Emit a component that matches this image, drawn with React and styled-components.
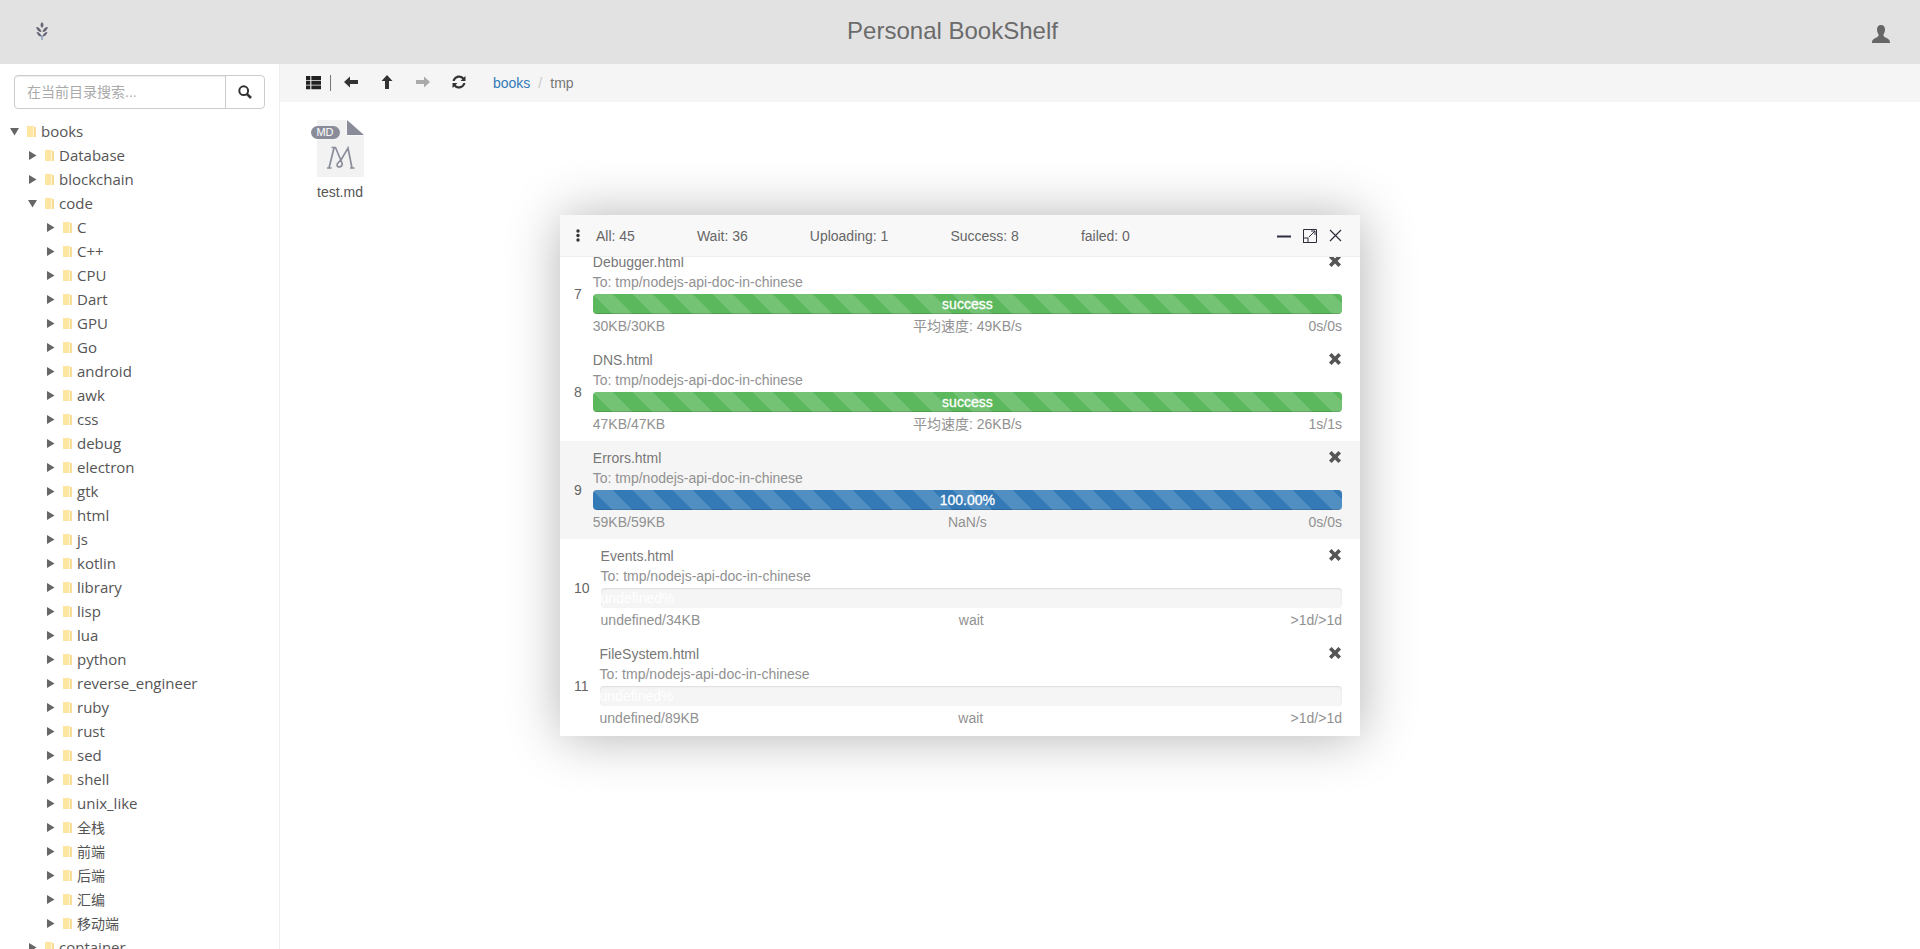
import React from 'react'
import styled, { createGlobalStyle } from 'styled-components'

const GlobalStyle = createGlobalStyle`
  html, body { margin: 0; padding: 0; height: 100%; overflow: hidden; }
  body { font-family: "Liberation Sans", "Noto Sans CJK SC", sans-serif; font-size: 14px; color: #333; background: #fff; }
`

const subFolders = ['C', 'C++', 'CPU', 'Dart', 'GPU', 'Go', 'android', 'awk', 'css', 'debug', 'electron', 'gtk', 'html', 'js', 'kotlin', 'library', 'lisp', 'lua', 'python', 'reverse_engineer', 'ruby', 'rust', 'sed', 'shell', 'unix_like', '全栈', '前端', '后端', '汇编', '移动端']

const uploads = [
  { no: 7, name: 'Debugger.html', size: '30KB/30KB', speed: '平均速度: 49KB/s', time: '0s/0s', bar: 'success', label: 'success' },
  { no: 8, name: 'DNS.html', size: '47KB/47KB', speed: '平均速度: 26KB/s', time: '1s/1s', bar: 'success', label: 'success' },
  { no: 9, name: 'Errors.html', size: '59KB/59KB', speed: 'NaN/s', time: '0s/0s', bar: 'active', label: '100.00%', hover: true },
  { no: 10, name: 'Events.html', size: 'undefined/34KB', speed: 'wait', time: '>1d/>1d', bar: 'wait', label: 'undefined%' },
  { no: 11, name: 'FileSystem.html', size: 'undefined/89KB', speed: 'wait', time: '>1d/>1d', bar: 'wait', label: 'undefined%' },
]

const Glyph = ({ size = 14, color = '#333', children }) => (
  <svg width={size} height={size} viewBox="0 0 14 14" fill={color}>{children}</svg>
)

const Arrow = ({ rotate = 0, color }) => (
  <Glyph color={color}>
    <path transform={`rotate(${rotate} 7 7)`} d="M0 7 L6 1.5 L6 5 L14 5 L14 9 L6 9 L6 12.5 Z" />
  </Glyph>
)

const Remove = () => (
  <Glyph size={14} color="#555">
    <path d="M3.6 1 L7 4.4 L10.4 1 L13 3.6 L9.6 7 L13 10.4 L10.4 13 L7 9.6 L3.6 13 L1 10.4 L4.4 7 L1 3.6 Z" />
  </Glyph>
)

const FolderIcon = () => (
  <svg width="9" height="11" viewBox="0 0 9 11">
    <rect width="7" height="11" fill="#fde5a2" />
    <rect x="7" y="1" width="2" height="10" fill="#f6dc95" />
    <rect x="6" y="1" width="1" height="10" fill="#fff6da" />
  </svg>
)

const Caret = ({ open }) => (
  <svg width="9" height="9" viewBox="0 0 9 9" fill="#666">
    {open ? <path d="M0 1 L9 1 L4.5 8.5 Z" /> : <path d="M1 0 L8.5 4.5 L1 9 Z" />}
  </svg>
)

const Wheat = () => (
  <svg width="12" height="18" viewBox="0 0 12 18">
    <path d="M6 0 C8 2 8 4 6 6 C4 4 4 2 6 0 Z" fill="#667" />
    <path d="M0 5 C3 5 5 7 5.5 10 C2.5 10 1 8 0 5 Z M12 5 C9 5 7 7 6.5 10 C9.5 10 11 8 12 5 Z M0.5 10 C3 10 5 12 5.5 14.5 C3 14.5 1.5 13 0.5 10 Z M11.5 10 C9 10 7 12 6.5 14.5 C9 14.5 10.5 13 11.5 10 Z" fill="#667" />
    <rect x="5.4" y="13" width="1.2" height="5" fill="#6f8fb5" />
  </svg>
)

const isCjk = (name) => /[\u4e00-\u9fff]/.test(name)

const App = () => (
  <Page>
    <GlobalStyle />
    <Header>
      <Logo><Wheat /></Logo>
      <Title>Personal BookShelf</Title>
      <UserButton>
        <svg width="18" height="18" viewBox="0 0 18 18" fill="#666">
          <path d="M9 0 C11.8 0 13 2 13 4.6 C13 7 12 8.6 11.4 9.6 C11.4 11.6 12.4 12 14 12.8 C16 13.7 18 14.6 18 18 L0 18 C0 14.6 2 13.7 4 12.8 C5.6 12 6.6 11.6 6.6 9.6 C6 8.6 5 7 5 4.6 C5 2 6.2 0 9 0 Z" />
        </svg>
      </UserButton>
    </Header>
    <Body>
      <Sidebar>
        <SearchBox>
          <SearchInput placeholder="在当前目录搜索..." />
          <SearchButton>
            <svg width="14" height="14" viewBox="0 0 14 14" fill="none" stroke="#333">
              <circle cx="5.7" cy="5.7" r="4.4" strokeWidth="2" />
              <path d="M8.8 8.8 L13 13" strokeWidth="2.6" />
            </svg>
          </SearchButton>
        </SearchBox>
        <Tree>
          <TreeRow $level={0}><Caret open /><FolderIcon /><span>books</span></TreeRow>
          <TreeRow $level={1}><Caret /><FolderIcon /><span>Database</span></TreeRow>
          <TreeRow $level={1}><Caret /><FolderIcon /><span>blockchain</span></TreeRow>
          <TreeRow $level={1}><Caret open /><FolderIcon /><span>code</span></TreeRow>
          {subFolders.map((name) => (
            <TreeRow $level={2} $cjk={isCjk(name)} key={name}><Caret /><FolderIcon /><span>{name}</span></TreeRow>
          ))}
          <TreeRow $level={1}><Caret /><FolderIcon /><span>container</span></TreeRow>
        </Tree>
      </Sidebar>
      <Main>
        <Toolbar>
          <ToolButton>
            <Glyph size={15} color="#222">
              <path d="M0 1 H4 V4.6 H0 Z M5 1 H14 V4.6 H5 Z M0 5.4 H4 V9 H0 Z M5 5.4 H14 V9 H5 Z M0 9.8 H4 V13.4 H0 Z M5 9.8 H14 V13.4 H5 Z" />
            </Glyph>
          </ToolButton>
          <ToolDivider />
          <ToolButton $w={36}><Arrow color="#333" /></ToolButton>
          <ToolButton $w={36}><Arrow rotate={90} color="#333" /></ToolButton>
          <ToolButton $w={36}><Arrow rotate={180} color="#aaa" /></ToolButton>
          <ToolButton $w={36}>
            <Glyph color="#333">
              <path d="M7 0.5 C9 0.5 10.6 1.3 11.8 2.6 L13.5 1 V6 H8.5 L10.3 4.2 C9.4 3.2 8.3 2.7 7 2.7 C4.9 2.7 3.2 4 2.7 6 H0.6 C1.1 2.9 3.8 0.5 7 0.5 Z M0.5 8 H5.5 L3.7 9.8 C4.6 10.8 5.7 11.3 7 11.3 C9.1 11.3 10.8 10 11.3 8 H13.4 C12.9 11.1 10.2 13.5 7 13.5 C5 13.5 3.4 12.7 2.2 11.4 L0.5 13 Z" />
            </Glyph>
          </ToolButton>
          <Crumbs>
            <CrumbLink>books</CrumbLink>
            <CrumbSep>/</CrumbSep>
            <span>tmp</span>
          </Crumbs>
        </Toolbar>
        <Files>
          <FileCard>
            <FileIcon>
              <svg width="47" height="57" viewBox="0 0 47 57">
                <path d="M0 0 H29.5 V15.5 H47 V57 H0 Z" fill="#f2f2f3" />
                <path d="M30 0 L47 15 H30 Z" fill="#8a8d99" />
                <path d="M10 48 H14.5 M12 48 L17 28 M14.5 27.5 H18.5 L25 43 C26.5 47 20 48.5 20 45 C20 43 22 42 24 40 L31 28 L35 48 M33 48 H37.5" fill="none" stroke="#8a8d99" strokeWidth="1.7" />
              </svg>
              <FileBadge>MD</FileBadge>
            </FileIcon>
            <FileName>test.md</FileName>
          </FileCard>
        </Files>
      </Main>
    </Body>

    <UploadDialog>
      <DialogHead>
        <MoreDots>
          <svg width="4" height="13" viewBox="0 0 4 13" fill="#333">
            <circle cx="2" cy="2" r="1.7" /><circle cx="2" cy="6.5" r="1.7" /><circle cx="2" cy="11" r="1.7" />
          </svg>
        </MoreDots>
        <Counts>
          <span>All: 45</span>
          <span>Wait: 36</span>
          <span>Uploading: 1</span>
          <span>Success: 8</span>
          <span>failed: 0</span>
        </Counts>
        <WindowButtons>
          <svg width="14" height="14" viewBox="0 0 14 14"><rect y="6.5" width="14" height="2" fill="#2e2d3c" /></svg>
          <svg width="14" height="14" viewBox="0 0 14 14" fill="none" stroke="#2e2d3c">
            <path d="M.5 9 V.5 H13.5 V13.5 H5" /><rect x=".5" y="9" width="4.5" height="4.5" /><path d="M6 8 L12 2 M8 2 H12 V6" />
          </svg>
          <svg width="13" height="13" viewBox="0 0 13 13" stroke="#2e2d3c" strokeWidth="1.2"><path d="M1 1 L12 12 M12 1 L1 12" /></svg>
        </WindowButtons>
      </DialogHead>
      <UploadList>
        {uploads.map((u) => (
          <UploadItem key={u.no} $hover={u.hover}>
            <ItemNo>{u.no}</ItemNo>
            <ItemBody>
              <ItemTop>
                <ItemName>{u.name}</ItemName>
                <Remove />
              </ItemTop>
              <ItemTarget>To: tmp/nodejs-api-doc-in-chinese</ItemTarget>
              <Progress><Bar $kind={u.bar}>{u.label}</Bar></Progress>
              <ItemStats>
                <span>{u.size}</span>
                <StatMid>{u.speed}</StatMid>
                <StatEnd>{u.time}</StatEnd>
              </ItemStats>
            </ItemBody>
          </UploadItem>
        ))}
      </UploadList>
    </UploadDialog>
  </Page>
)

export default App

const Page = styled.div`
  height: 949px;
  display: flex;
  flex-direction: column;
  overflow: hidden;
`
const Header = styled.header`
  height: 64px;
  flex: none;
  box-sizing: border-box;
  background: #e2e2e2;
  display: flex;
  align-items: center;
  justify-content: space-between;
  padding: 0 30px 2px 35px;
`
const Logo = styled.div`
  width: 14px;
  display: flex;
  justify-content: center;
`
const Title = styled.h1`
  margin: 0;
  font-size: 24px;
  font-weight: 400;
  color: #6b6b6b;
`
const UserButton = styled.div`
  width: 34px;
  display: flex;
  justify-content: flex-end;
  padding-top: 6px;
`
const Body = styled.div`
  flex: 1;
  display: flex;
  min-height: 0;
`
const Sidebar = styled.aside`
  width: 280px;
  flex: none;
  box-sizing: border-box;
  border-right: 1px solid #eee;
  padding: 11px 0 0 0;
  overflow: hidden;
`
const SearchBox = styled.div`
  margin: 0 14px;
  width: 251px;
  height: 34px;
  display: flex;
  box-sizing: border-box;
  border: 1px solid #ccc;
  border-radius: 4px;
`
const SearchInput = styled.input`
  flex: 1;
  min-width: 0;
  border: 0;
  outline: 0;
  background: none;
  padding: 0 12px;
  font: 14px "Liberation Sans", "Noto Sans CJK SC", sans-serif;
  box-shadow: inset 0 1px 1px rgba(0, 0, 0, .075);
  border-radius: 4px 0 0 4px;
  &::placeholder { color: #aaa; }
`
const SearchButton = styled.div`
  width: 38px;
  border-left: 1px solid #ccc;
  display: flex;
  align-items: center;
  justify-content: center;
`
const Tree = styled.div`
  margin-top: 10px;
`
const TreeRow = styled.div`
  height: 24px;
  display: flex;
  align-items: center;
  padding-left: ${(p) => 10 + p.$level * 18}px;
  font-family: "Open Sans", "Noto Sans CJK SC", sans-serif;
  font-size: ${(p) => (p.$cjk ? 14 : 15)}px;
  color: #555;
  white-space: nowrap;
  svg:nth-child(2) { margin: 0 5px 0 8px; }
`
const Main = styled.main`
  flex: 1;
  min-width: 0;
`
const Toolbar = styled.div`
  height: 38px;
  background: #f5f5f5;
  display: flex;
  align-items: center;
  padding-left: 26px;
`
const ToolButton = styled.div`
  width: ${(p) => p.$w || 15}px;
  display: flex;
  justify-content: center;
  padding-bottom: 2px;
`
const ToolDivider = styled.div`
  width: 1px;
  height: 16px;
  background: #777;
  margin: 0 2px 0 9px;
`
const Crumbs = styled.div`
  margin-left: 16px;
  color: #777;
  display: flex;
  gap: 8px;
`
const CrumbLink = styled.span`
  color: #337ab7;
`
const CrumbSep = styled.span`
  color: #ccc;
`
const Files = styled.div`
  padding: 18px 0 0 29px;
`
const FileCard = styled.div`
  width: 62px;
  display: flex;
  flex-direction: column;
  align-items: center;
`
const FileIcon = styled.div`
  position: relative;
  width: 47px;
  height: 57px;
  & > svg { display: block; }
`
const FileBadge = styled.span`
  position: absolute;
  left: -6px;
  top: 6px;
  width: 29px;
  height: 13px;
  border-radius: 7px;
  background: #8a8d99;
  color: #fff;
  font-size: 11px;
  line-height: 13px;
  text-align: center;
`
const FileName = styled.div`
  margin-top: 7px;
  color: #555;
`
const UploadDialog = styled.section`
  position: absolute;
  left: 560px;
  top: 215px;
  width: 800px;
  height: 521px;
  background: #fff;
  box-shadow: 1px 1px 50px rgba(0, 0, 0, .3);
  display: flex;
  flex-direction: column;
`
const DialogHead = styled.div`
  height: 42px;
  flex: none;
  box-sizing: border-box;
  background: #f8f8f8;
  border-bottom: 1px solid #eee;
  display: flex;
  align-items: center;
  padding: 0 18px 0 16px;
  color: #666;
`
const MoreDots = styled.div`
  display: flex;
  margin-right: 16px;
`
const Counts = styled.div`
  flex: 1;
  display: flex;
  gap: 62px;
`
const WindowButtons = styled.div`
  display: flex;
  align-items: center;
  gap: 12px;
`
const UploadList = styled.div`
  flex: 1;
  overflow: hidden;
  & > div:first-child { margin-top: -12px; }
`
const UploadItem = styled.div`
  height: 98px;
  box-sizing: border-box;
  display: flex;
  align-items: center;
  padding: 0 18px 0 14px;
  background: ${(p) => (p.$hover ? '#f5f5f5' : '#fff')};
`
const ItemNo = styled.div`
  color: #666;
  margin-right: 11px;
`
const ItemBody = styled.div`
  flex: 1;
  min-width: 0;
  align-self: stretch;
  padding-top: 7px;
`
const ItemTop = styled.div`
  display: flex;
  align-items: center;
  justify-content: space-between;
  height: 20px;
  & > svg { margin-bottom: 2px; }
`
const ItemName = styled.div`
  color: #777;
`
const ItemTarget = styled.div`
  color: #919191;
  line-height: 20px;
`
const Progress = styled.div`
  height: 20px;
  margin-top: 2px;
  background: #f5f5f5;
  border-radius: 4px;
  overflow: hidden;
  box-shadow: inset 0 1px 2px rgba(0, 0, 0, .1);
`
const barColors = { success: '#5cb85c', active: '#337ab7', wait: 'transparent' }
const Bar = styled.div`
  height: 100%;
  background-color: ${(p) => barColors[p.$kind]};
  background-image: ${(p) => (p.$kind === 'wait' ? 'none' : 'linear-gradient(45deg, rgba(255,255,255,.15) 25%, transparent 25%, transparent 50%, rgba(255,255,255,.15) 50%, rgba(255,255,255,.15) 75%, transparent 75%, transparent)')};
  background-size: 40px 40px;
  box-shadow: ${(p) => (p.$kind === 'wait' ? 'none' : 'inset 0 -1px 0 rgba(0,0,0,.15)')};
  color: #fff;
  font-size: 14px;
  -webkit-text-stroke: ${(p) => (p.$kind === 'wait' ? 0 : '.3px #fff')};
  line-height: 20px;
  text-align: ${(p) => (p.$kind === 'wait' ? 'left' : 'center')};
`
const ItemStats = styled.div`
  display: grid;
  grid-template-columns: 1fr 1fr 1fr;
  line-height: 20px;
  margin-top: 2px;
  color: #919191;
`
const StatMid = styled.span`
  text-align: center;
`
const StatEnd = styled.span`
  text-align: right;
`
